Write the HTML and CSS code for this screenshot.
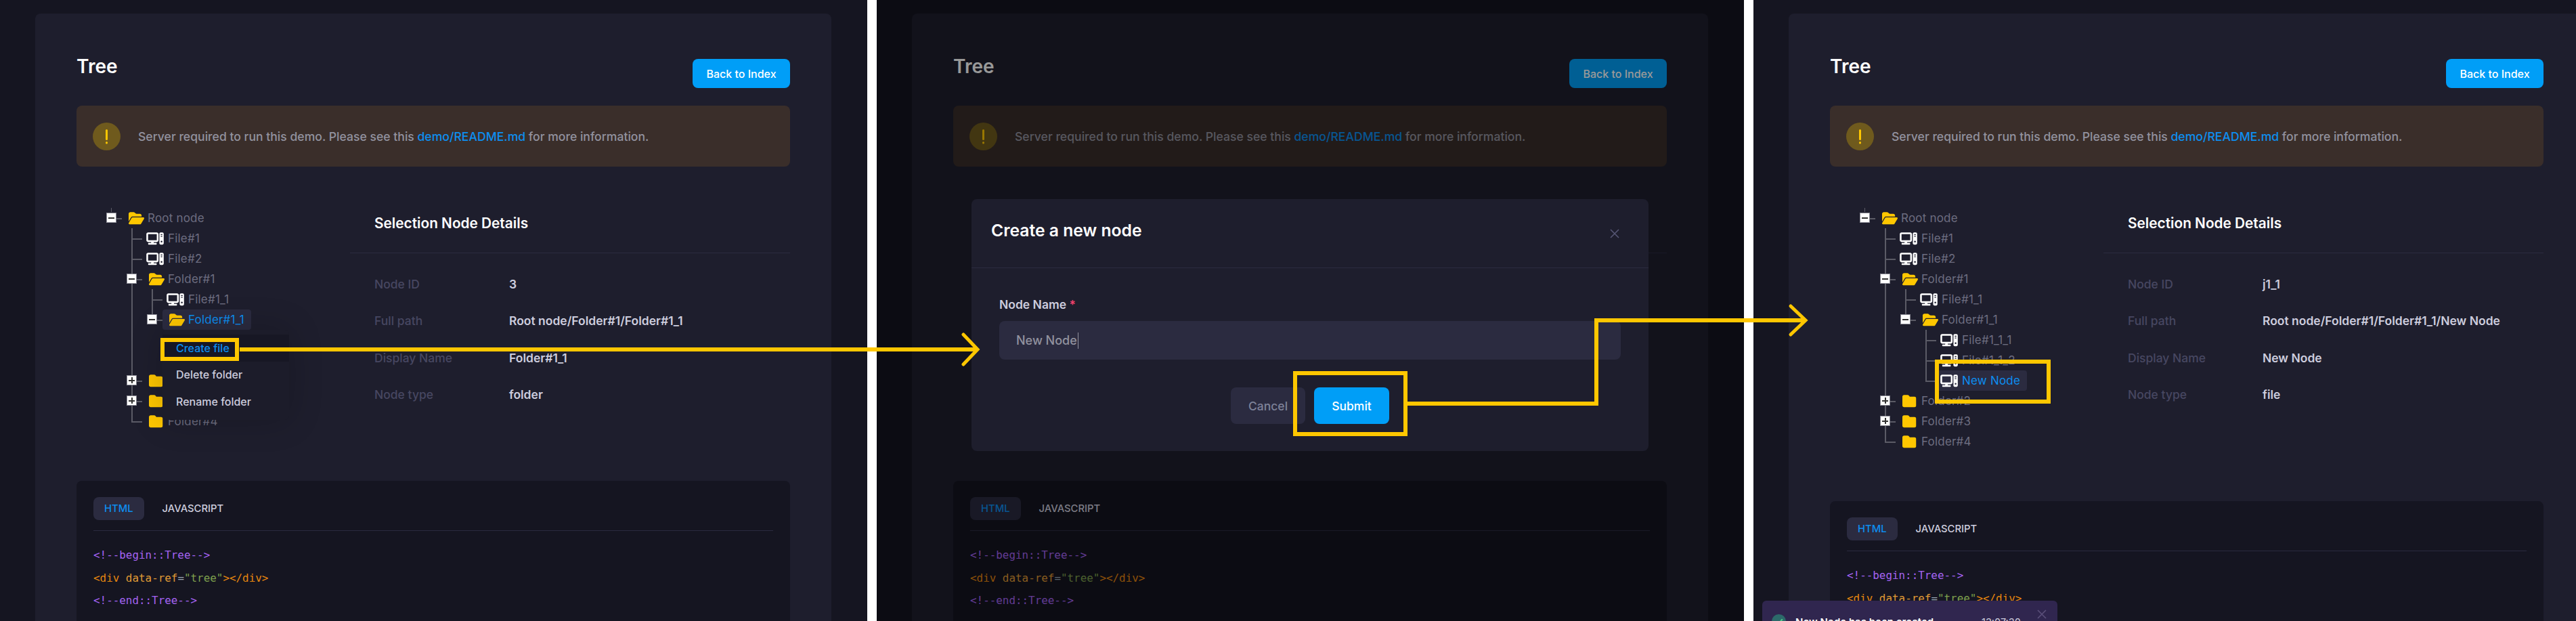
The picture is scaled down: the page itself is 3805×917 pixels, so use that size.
FILE: index.html
```html
<!DOCTYPE html>
<html lang="en">
<head>
<meta charset="utf-8">
<title>Tree</title>
<link rel="stylesheet" href="styles.css">
</head>
<body>
<svg class="defs" aria-hidden="true">
  <symbol id="folder" viewBox="0 0 512 512"><path d="M64 480H448c35.300 0 64-28.700 64-64V160c0-35.300-28.700-64-64-64H288c-10.100 0-19.600-4.700-25.600-12.800L243.200 58.800C231.100 42.700 212.100 32 192 32H64C28.700 32 0 60.700 0 96V416c0 35.300 28.700 64 64 64z"/></symbol>
  <symbol id="folder-open" viewBox="0 0 576 512"><path d="M88.700 223.800L0 375.800V96C0 60.700 28.700 32 64 32H181.500c17 0 33.300 6.700 45.300 18.700l26.500 26.500c12 12 28.300 18.700 45.300 18.700H416c35.300 0 64 28.700 64 64v32H144c-22.800 0-43.800 12.100-55.300 31.800zm27.600 16.100C122.100 230 132.600 224 144 224H544c11.500 0 22 6.100 27.700 16.100s5.700 22.200-.1 32.100l-112 192C453.900 474 443.400 480 432 480H32c-11.500 0-22-6.100-27.700-16.100s-5.700-22.200 .1-32.100l112-192z"/></symbol>
  <symbol id="computer" viewBox="0 0 640 512"><path d="M384 96V320H64L64 96H384zM64 32C28.700 32 0 60.700 0 96V320c0 35.300 28.700 64 64 64H181.300l-10.700 32H96c-17.700 0-32 14.300-32 32s14.300 32 32 32H352c17.700 0 32-14.300 32-32s-14.300-32-32-32H277.300l-10.700-32H384c35.300 0 64-28.700 64-64V96c0-35.300-28.700-64-64-64H64zm464 0c-26.500 0-48 21.500-48 48V432c0 26.500 21.500 48 48 48h64c26.500 0 48-21.500 48-48V80c0-26.500-21.500-48-48-48H528zm16 64h32c8.800 0 16 7.200 16 16s-7.200 16-16 16H544c-8.800 0-16-7.200-16-16s7.200-16 16-16zm-16 80c0-8.800 7.200-16 16-16h32c8.800 0 16 7.200 16 16s-7.200 16-16 16H544c-8.800 0-16-7.200-16-16zm32 160a32 32 0 1 1 0 64 32 32 0 1 1 0-64z"/></symbol>
  <symbol id="warn" viewBox="0 0 41 41"><circle cx="20.500" cy="20.500" r="20.500" class="warn-disc"/><rect x="19" y="10" width="3" height="16" rx="1.500" class="warn-mark"/><rect x="19" y="28" width="3" height="3.500" rx="1.500" class="warn-mark"/></symbol>
  <symbol id="cross" viewBox="0 0 14 14"><path d="M1 1l12 12M13 1L1 13" fill="none" stroke="currentColor" stroke-width="1.600"/></symbol>
</svg>

<main class="page">

  <!-- Step 1: context menu on Folder#1_1 -->
  <section class="panel">
    <div class="card">
      <header class="card-head">
        <h1 class="title">Tree</h1>
        <a class="btn btn-primary btn-back">Back to Index</a>
      </header>
      <div class="alert">
        <svg class="alert-icon"><use href="#warn"/></svg>
        <p class="alert-text">Server required to run this demo. Please see this <a class="link">demo/README.md</a> for more information.</p>
      </div>
      <div class="content">
        <div class="tree">
          <ul class="tree-root">
            <li class="item root">
              <div class="node"><span class="slot"><i class="toggle minus"></i></span><a class="anchor"><span class="ico"><svg class="i-open"><use href="#folder-open"/></svg></span>Root node</a></div>
              <ul>
                <li class="item"><div class="node"><span class="slot"></span><a class="anchor"><span class="ico file"><svg class="i-file"><use href="#computer"/></svg></span>File#1</a></div></li>
                <li class="item"><div class="node"><span class="slot"></span><a class="anchor"><span class="ico file"><svg class="i-file"><use href="#computer"/></svg></span>File#2</a></div></li>
                <li class="item">
                  <div class="node"><span class="slot"><i class="toggle minus"></i></span><a class="anchor"><span class="ico"><svg class="i-open"><use href="#folder-open"/></svg></span>Folder#1</a></div>
                  <ul>
                    <li class="item"><div class="node"><span class="slot"></span><a class="anchor"><span class="ico file"><svg class="i-file"><use href="#computer"/></svg></span>File#1_1</a></div></li>
                    <li class="item last">
                      <div class="node"><span class="slot"><i class="toggle minus"></i></span><a class="anchor selected"><span class="ico"><svg class="i-open"><use href="#folder-open"/></svg></span>Folder#1_1</a></div>
                      <div class="tree-gap"></div>
                    </li>
                  </ul>
                </li>
                <li class="item"><div class="node"><span class="slot"><i class="toggle plus"></i></span><a class="anchor"><span class="ico"><svg class="i-folder"><use href="#folder"/></svg></span></a></div></li>
                <li class="item"><div class="node"><span class="slot"><i class="toggle plus"></i></span><a class="anchor"><span class="ico"><svg class="i-folder"><use href="#folder"/></svg></span></a></div></li>
                <li class="item last"><div class="node"><span class="slot"></span><a class="anchor"><span class="ico"><svg class="i-folder"><use href="#folder"/></svg></span>Folder#4</a></div></li>
              </ul>
            </li>
          </ul>
          <ul class="menu">
            <li class="menu-item active">Create file</li>
            <li class="menu-item">Delete folder</li>
            <li class="menu-item">Rename folder</li>
          </ul>
        </div>
        <div class="details">
          <h2 class="details-head">Selection Node Details</h2>
          <dl class="facts">
            <dt>Node ID</dt><dd>3</dd>
            <dt>Full path</dt><dd>Root node/Folder#1/Folder#1_1</dd>
            <dt>Display Name</dt><dd>Folder#1_1</dd>
            <dt>Node type</dt><dd>folder</dd>
          </dl>
        </div>
      </div>
      <div class="code">
        <div class="tabs"><span class="tab on">HTML</span><span class="tab">JAVASCRIPT</span></div>
        <pre class="src"><span class="c">&lt;!--begin::Tree--&gt;</span>
<span class="t">&lt;div</span> <span class="a">data-ref</span><span class="e">=</span><span class="s">"tree"</span><span class="t">&gt;&lt;/div&gt;</span>
<span class="c">&lt;!--end::Tree--&gt;</span></pre>
      </div>
    </div>
  </section>

  <!-- Step 2: modal -->
  <section class="panel">
    <div class="card">
      <header class="card-head">
        <h1 class="title">Tree</h1>
        <a class="btn btn-primary btn-back">Back to Index</a>
      </header>
      <div class="alert">
        <svg class="alert-icon"><use href="#warn"/></svg>
        <p class="alert-text">Server required to run this demo. Please see this <a class="link">demo/README.md</a> for more information.</p>
      </div>
      <div class="content content-covered">
        <div class="tree"></div>
        <div class="details"><div class="details-head"></div></div>
      </div>
      <div class="code">
        <div class="tabs"><span class="tab on">HTML</span><span class="tab">JAVASCRIPT</span></div>
        <pre class="src"><span class="c">&lt;!--begin::Tree--&gt;</span>
<span class="t">&lt;div</span> <span class="a">data-ref</span><span class="e">=</span><span class="s">"tree"</span><span class="t">&gt;&lt;/div&gt;</span>
<span class="c">&lt;!--end::Tree--&gt;</span></pre>
      </div>
    </div>
    <div class="backdrop"></div>
    <div class="modal">
      <div class="modal-head">
        <h2 class="modal-title">Create a new node</h2>
        <svg class="modal-close"><use href="#cross"/></svg>
      </div>
      <div class="modal-body">
        <label class="field-label">Node Name <span class="req">*</span></label>
        <div class="input"><span class="input-text">New Node</span></div>
        <div class="modal-actions">
          <a class="btn btn-muted">Cancel</a>
          <a class="btn btn-primary btn-submit">Submit</a>
        </div>
      </div>
    </div>
  </section>

  <!-- Step 3: node created -->
  <section class="panel">
    <div class="card">
      <header class="card-head">
        <h1 class="title">Tree</h1>
        <a class="btn btn-primary btn-back">Back to Index</a>
      </header>
      <div class="alert">
        <svg class="alert-icon"><use href="#warn"/></svg>
        <p class="alert-text">Server required to run this demo. Please see this <a class="link">demo/README.md</a> for more information.</p>
      </div>
      <div class="content">
        <div class="tree">
          <ul class="tree-root">
            <li class="item root">
              <div class="node"><span class="slot"><i class="toggle minus"></i></span><a class="anchor"><span class="ico"><svg class="i-open"><use href="#folder-open"/></svg></span>Root node</a></div>
              <ul>
                <li class="item"><div class="node"><span class="slot"></span><a class="anchor"><span class="ico file"><svg class="i-file"><use href="#computer"/></svg></span>File#1</a></div></li>
                <li class="item"><div class="node"><span class="slot"></span><a class="anchor"><span class="ico file"><svg class="i-file"><use href="#computer"/></svg></span>File#2</a></div></li>
                <li class="item">
                  <div class="node"><span class="slot"><i class="toggle minus"></i></span><a class="anchor"><span class="ico"><svg class="i-open"><use href="#folder-open"/></svg></span>Folder#1</a></div>
                  <ul>
                    <li class="item"><div class="node"><span class="slot"></span><a class="anchor"><span class="ico file"><svg class="i-file"><use href="#computer"/></svg></span>File#1_1</a></div></li>
                    <li class="item last">
                      <div class="node"><span class="slot"><i class="toggle minus"></i></span><a class="anchor"><span class="ico"><svg class="i-open"><use href="#folder-open"/></svg></span>Folder#1_1</a></div>
                      <ul>
                        <li class="item"><div class="node"><span class="slot"></span><a class="anchor"><span class="ico file"><svg class="i-file"><use href="#computer"/></svg></span>File#1_1_1</a></div></li>
                        <li class="item"><div class="node"><span class="slot"></span><a class="anchor"><span class="ico file"><svg class="i-file"><use href="#computer"/></svg></span>File#1_1_2</a></div></li>
                        <li class="item last"><div class="node"><span class="slot"></span><a class="anchor selected"><span class="ico file"><svg class="i-file"><use href="#computer"/></svg></span>New Node</a></div></li>
                      </ul>
                    </li>
                  </ul>
                </li>
                <li class="item"><div class="node"><span class="slot"><i class="toggle plus"></i></span><a class="anchor"><span class="ico"><svg class="i-folder"><use href="#folder"/></svg></span>Folder#2</a></div></li>
                <li class="item"><div class="node"><span class="slot"><i class="toggle plus"></i></span><a class="anchor"><span class="ico"><svg class="i-folder"><use href="#folder"/></svg></span>Folder#3</a></div></li>
                <li class="item last"><div class="node"><span class="slot"></span><a class="anchor"><span class="ico"><svg class="i-folder"><use href="#folder"/></svg></span>Folder#4</a></div></li>
              </ul>
            </li>
          </ul>
        </div>
        <div class="details">
          <h2 class="details-head">Selection Node Details</h2>
          <dl class="facts">
            <dt>Node ID</dt><dd>j1_1</dd>
            <dt>Full path</dt><dd>Root node/Folder#1/Folder#1_1/New Node</dd>
            <dt>Display Name</dt><dd>New Node</dd>
            <dt>Node type</dt><dd>file</dd>
          </dl>
        </div>
      </div>
      <div class="code">
        <div class="tabs"><span class="tab on">HTML</span><span class="tab">JAVASCRIPT</span></div>
        <pre class="src"><span class="c">&lt;!--begin::Tree--&gt;</span>
<span class="t">&lt;div</span> <span class="a">data-ref</span><span class="e">=</span><span class="s">"tree"</span><span class="t">&gt;&lt;/div&gt;</span></pre>
      </div>
    </div>
    <div class="toast">
      <span class="toast-check"><svg viewBox="0 0 20 20"><path d="M5 11l3.500 3.500L15 7" fill="none" stroke="#50cd89" stroke-width="2"/></svg></span>
      <strong class="toast-title">New Node has been created</strong>
      <span class="toast-time">13:07:30</span>
      <svg class="toast-close"><use href="#cross"/></svg>
    </div>
  </section>

  <!-- Tutorial annotations drawn over the three screenshots -->
  <svg class="marks" viewBox="0 0 3805 917" aria-hidden="true">
    <rect x="240" y="502" width="110" height="28"/>
    <path d="M354 516H1444"/>
    <path d="M1423 494l21 22-21 22" class="head"/>
    <rect x="1913" y="551" width="163" height="90"/>
    <path d="M2079 596H2358V473H2667"/>
    <path d="M2645 452l22 21-22 21" class="head"/>
    <rect x="2861" y="534" width="165" height="59"/>
  </svg>
</main>
</body>
</html>
```

FILE: styles.css
```css
* { box-sizing: border-box; }
html, body { margin: 0; background: #fff; }
body { font-family: Inter, "Liberation Sans", sans-serif; }
h1, h2, p, ul, dl, dd, pre { margin: 0; padding: 0; }
ul { list-style: none; }
.defs { position: absolute; width: 0; height: 0; }

.page { position: relative; display: flex; gap: 14px; width: 3805px; height: 917px; overflow: hidden; background: #fff; }
.panel { position: relative; flex: 0 0 1281px; height: 917px; padding: 20px 53px 0 52px; overflow: hidden; background: #151521; }
.card { height: 897px; padding: 67px 61px 0; overflow: hidden; background: #1e1e2d; border-radius: 8px 8px 0 0; }
.card-head { display: flex; justify-content: space-between; align-items: flex-start; height: 43px; margin-bottom: 26px; }
.title { margin-top: -3px; font-size: 28px; line-height: 28px; font-weight: 600; color: #fff; }

.btn { display: flex; align-items: center; justify-content: center; border-radius: 8px; font-weight: 500; }
.btn-primary { background: #009ef7; color: #fff; }
.btn-back { width: 144px; height: 43px; font-size: 16px; }

.alert { display: flex; align-items: center; gap: 26px; height: 90px; padding: 0 24px; background: #3a2e2a; border-radius: 8px; }
.alert-icon { flex: none; width: 41px; height: 41px; }
.warn-disc { fill: #6f5a1d; }
.warn-mark { fill: #ffc700; }
.alert-text { font-size: 17.600px; font-weight: 500; color: #92929f; }
.link { color: #0d8ef0; }

.content { display: flex; margin-top: 61px; margin-bottom: 73px; }
.content-covered { height: 330px; }

.tree { position: relative; flex: none; width: 360px; margin-left: 44px; font-size: 17px; color: #6d6d80; letter-spacing: .2px; }
.tree ul ul { padding-left: 30px; }
.item { position: relative; }
.item::before { content: ""; position: absolute; left: 7px; top: 0; bottom: 0; width: 1.500px; background: #5b5b66; }
.item.last::before { bottom: auto; height: 15px; }
.root::before { top: 0; bottom: auto; height: 6px; width: 1px; }
.node { position: relative; display: flex; align-items: center; height: 30px; }
.slot { position: relative; flex: none; width: 23px; height: 30px; }
.slot::after { content: ""; position: absolute; left: 7px; right: 0; top: 15px; height: 1.500px; background: #5b5b66; }
.toggle { position: absolute; z-index: 1; left: 0; top: 7px; width: 15px; height: 15px; background: #fff; border: 1px solid #8a8a94; }
.toggle::before { content: ""; position: absolute; left: 2px; right: 2px; top: 5.500px; height: 2px; background: #333; }
.plus::after { content: ""; position: absolute; top: 2px; bottom: 2px; left: 5.500px; width: 2px; background: #333; }
.anchor { display: flex; align-items: center; height: 30px; padding-right: 10px; border-radius: 4px; white-space: nowrap; }
.anchor.selected { background: #2b2b40; color: #0d8ef0; }
.ico { display: flex; align-items: center; flex: none; width: 38px; padding-left: 10px; }
.ico.file { padding-left: 6px; }
.i-open { width: 23px; height: 20.500px; fill: #ffc700; }
.i-folder { width: 20.500px; height: 20.500px; fill: #ffc700; }
.i-file { width: 26px; height: 20.500px; fill: #fff; }
.tree-gap { height: 60px; }

.menu { position: absolute; z-index: 2; left: 83px; top: 180px; width: 187px; height: 133px; padding-top: 7px; background: #1c1c2a; border-radius: 6px; box-shadow: 0 0 50px rgba(0, 0, 0, .2); font-size: 16px; font-weight: 500; color: #cdcdde; letter-spacing: 0; }
.menu-item { display: flex; align-items: center; height: 39.500px; padding-left: 20px; }
.menu-item.active { background: #171724; color: #0d8ef0; }

.details { flex: 1; min-width: 0; }
.details-head { height: 67px; padding-left: 36px; border-bottom: 1px solid #2b2b40; font-size: 20.800px; line-height: 45px; font-weight: 600; color: #fff; }
.facts { display: grid; grid-template-columns: 199px 1fr; grid-auto-rows: 54.500px; align-items: center; margin-top: 18px; padding-left: 36px; font-size: 17.500px; font-weight: 500; }
.facts dt { color: #474761; }
.facts dd { color: #cdcdde; font-weight: 600; }

.code { height: 400px; padding: 24px 25px; background: #151521; border-radius: 8px 8px 0 0; }
.tabs { display: flex; gap: 11px; height: 50px; padding-bottom: 16px; border-bottom: 1px solid #2b2b40; }
.tab { display: flex; align-items: center; height: 34px; padding: 0 16px; border-radius: 8px; font-size: 14.800px; font-weight: 500; color: #cdcdde; }
.tab.on { background: #2b2b40; color: #0d8ef0; }
.src { margin-top: 19px; font-family: "DejaVu Sans Mono", "Liberation Mono", monospace; font-size: 15.900px; line-height: 33.500px; }
.c { color: #a463f2; }
.t { color: #e5860f; }
.a { color: #e09a35; }
.e { color: #9aa7b5; }
.s { color: #7ea04d; }

.backdrop { position: absolute; inset: 0; background: rgba(0, 0, 0, .4); }
.modal { position: absolute; left: 140px; top: 294px; width: 1000px; height: 372px; background: #1e1e2d; border-radius: 8px; }
.modal-head { position: relative; height: 102px; padding: 29px 29px 0; border-bottom: 1px solid #2b2b40; }
.modal-title { font-size: 24.700px; line-height: 34px; font-weight: 600; color: #fff; }
.modal-close { position: absolute; right: 43px; top: 44px; width: 14px; height: 14px; color: #565674; }
.modal-body { padding: 42px 41px 0; }
.field-label { display: block; height: 24px; font-size: 17.500px; line-height: 24px; font-weight: 600; color: #cdcdde; }
.req { color: #f1416c; }
.input { display: flex; align-items: center; height: 57px; margin-top: 12px; padding-left: 25px; background: #2b2b40; border-radius: 8px; font-size: 18px; font-weight: 500; color: #92929f; }
.input-text { padding-right: 1px; border-right: 1px solid #92929f; line-height: 24px; }
.modal-actions { display: flex; justify-content: center; gap: 13px; margin-top: 41px; }
.btn-muted { width: 110px; height: 54px; background: #2b2b40; color: #7e8299; font-size: 17.500px; }
.btn-submit { width: 111px; height: 54px; font-size: 17.500px; }

.toast { position: absolute; z-index: 3; left: 13px; top: 887px; display: flex; width: 436px; height: 60px; padding: 20px 0 0 14px; background: #30264f; border-radius: 6px; }
.toast-check { flex: none; display: block; width: 21px; height: 21px; border-radius: 50%; background: #2c6a6a; }
.toast-title { margin-left: 14px; font-size: 15px; line-height: 24px; font-weight: 600; color: #fff; white-space: nowrap; }
.toast-time { position: absolute; left: 324px; top: 20px; font-size: 14.500px; line-height: 24px; color: #cdcdde; }
.toast-close { position: absolute; left: 406px; top: 13px; width: 14px; height: 14px; color: #5a4f7a; }

.marks { position: absolute; z-index: 5; left: 0; top: 0; width: 3805px; height: 917px; pointer-events: none; fill: none; stroke: #ffc700; stroke-width: 6; }
.marks .head { stroke-width: 5; stroke-linecap: round; stroke-linejoin: miter; }
```
